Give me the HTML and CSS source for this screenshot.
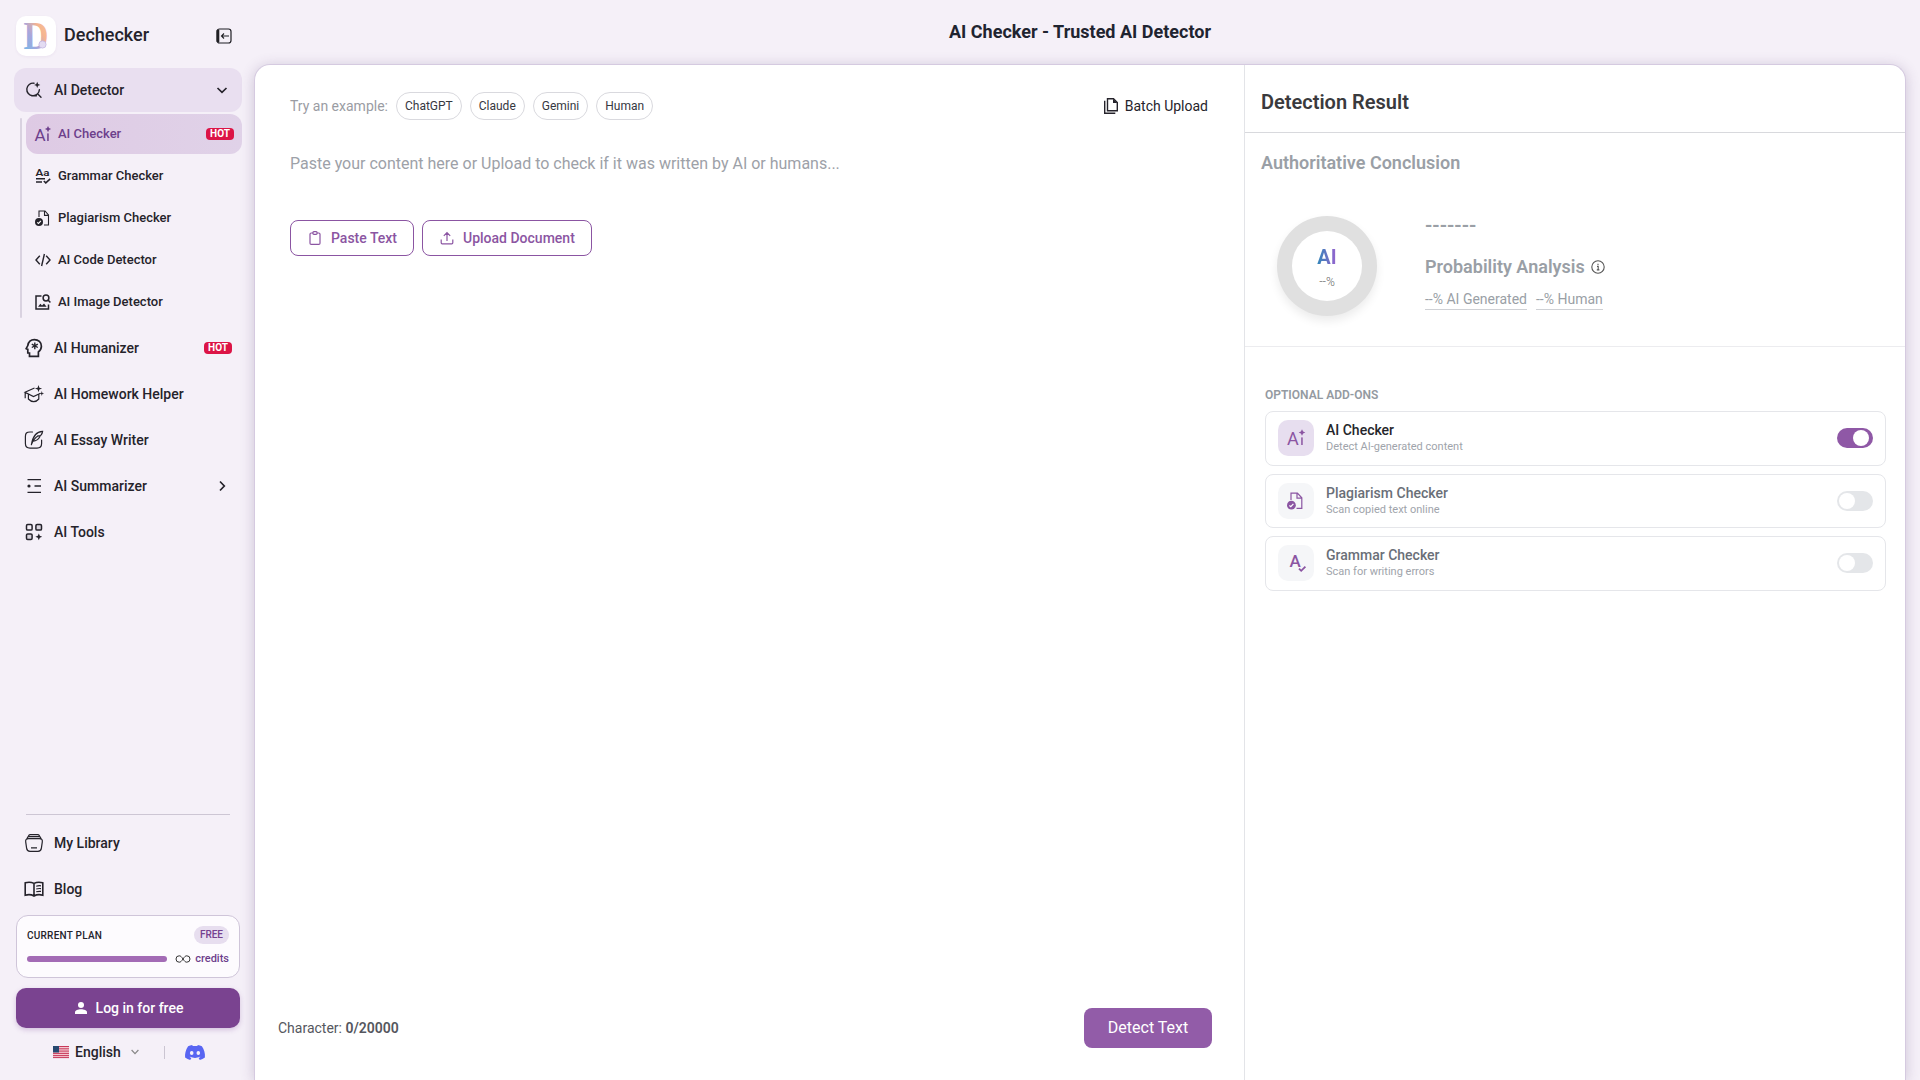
FILE: index.html
```html
<!DOCTYPE html>
<html lang="en">
<head>
  <meta charset="UTF-8">
  <title>AI Checker - Trusted AI Detector</title>
  <link rel="stylesheet" href="styles.css">
</head>
<body>
  <aside class="sidebar">
    <div class="brand">
      <div class="logo">
        <svg width="30" height="30" viewBox="0 0 30 30">
          <defs>
            <linearGradient id="logoFill" x1="0" y1="1" x2="1" y2="0">
              <stop offset="0" stop-color="#62c0ee"/>
              <stop offset="0.4" stop-color="#a9a6dc"/>
              <stop offset="0.65" stop-color="#f6b48f"/>
              <stop offset="1" stop-color="#f3cf9c"/>
            </linearGradient>
          </defs>
          <text x="2.500" y="28" class="logo-letter" textLength="25" lengthAdjust="spacingAndGlyphs" fill="url(#logoFill)">D</text>
          <circle cx="21.500" cy="23.500" r="3.600" fill="#e3dcf2" stroke="#c3b6e2" stroke-width="0.8"/>
        </svg>
      </div>
      <span class="brand-name">Dechecker</span>
      <svg class="collapse" width="16" height="16" viewBox="0 0 16 16" fill="none" stroke="#1f1f24">
        <rect x="1" y="1" width="14" height="14" rx="2.5" stroke-width="1.2"/>
        <path d="M2 2v12" stroke-width="2.6"/>
        <path d="M13 8H5.5M8 5.5L5.5 8L8 10.5" stroke-width="1.1"/>
      </svg>
    </div>

    <nav class="menu">
      <a class="menu-item open">
        <svg width="18" height="18" viewBox="0 0 18 18" fill="none" stroke="currentColor" stroke-width="1.4" stroke-linecap="round">
          <path d="M9 2.2A6.3 6.3 0 1 0 14.4 8.6M12.6 12.8L16 16.2M6.500 14.700h5"/>
          <path d="M12.2 .8l.9 2.2 2.2.9-2.2.9-.9 2.2-.9-2.2-2.2-.9 2.2-.9z" fill="currentColor" stroke="none"/>
        </svg>
        <span>AI Detector</span>
        <svg class="arrow" width="12" height="12" viewBox="0 0 12 12" fill="none" stroke="currentColor" stroke-width="1.7"><path d="M1.5 4L6 8.3L10.5 4"/></svg>
      </a>

      <div class="submenu">
        <a class="sub-item active">
          <svg width="16" height="16" viewBox="0 0 16 16" fill="currentColor">
            <text x="-0.500" y="15" font-size="17" font-weight="400">A</text>
            <rect x="12.200" y="7.400" width="1.500" height="7.600"/>
            <path d="M13 0l1 2.100 2.100 1-2.100 1-1 2.100-1-2.100-2.100-1 2.100-1z"/>
          </svg>
          <span>AI Checker</span>
          <b class="hot">HOT</b>
        </a>
        <a class="sub-item">
          <svg width="16" height="16" viewBox="0 0 16 16" fill="none" stroke="currentColor" stroke-width="1.5">
            <text x="0.500" y="8.400" font-size="9.500" font-weight="600" fill="currentColor" stroke="none" textLength="14" lengthAdjust="spacingAndGlyphs">Aa</text>
            <path d="M1 10.8h9M1 14h6M8.8 13l2 1.9 4.4-4"/>
          </svg>
          <span>Grammar Checker</span>
        </a>
        <a class="sub-item">
          <svg width="16" height="16" viewBox="0 0 16 16" fill="none" stroke="currentColor" stroke-width="1.1">
            <path d="M4 7V1h6l3.500 4v10H9M9.500 1v4.400h4"/>
            <circle cx="4" cy="12" r="4" fill="currentColor" stroke="none"/>
            <path d="M2.2 12.3l1.3 1.1 2.4-2.6" stroke="#fff"/>
          </svg>
          <span>Plagiarism Checker</span>
        </a>
        <a class="sub-item">
          <svg width="16" height="16" viewBox="0 0 16 16" fill="none" stroke="currentColor" stroke-width="1.4">
            <path d="M4.8 3.8L1 8l3.8 4.2M11.2 3.8L15 8l-3.8 4.2M9.4 2L6.6 14"/>
          </svg>
          <span>AI Code Detector</span>
        </a>
        <a class="sub-item">
          <svg width="16" height="16" viewBox="0 0 16 16" fill="none" stroke="currentColor" stroke-width="1.5">
            <path d="M6.5 2H1v13h12.5v-4.5"/>
            <circle cx="11" cy="4" r="2.9"/>
            <path d="M13 6l2.4 2.6"/>
            <path d="M3 12.8l2.4-3 1.6 1.8L9 9.4l2.6 3.4z" fill="currentColor" stroke="none"/>
          </svg>
          <span>AI Image Detector</span>
        </a>
      </div>

      <a class="menu-item">
        <svg width="18" height="20" viewBox="0 0 18 20" fill="none" stroke="currentColor" stroke-width="1.7">
          <path d="M4.5 18.400v-3.400H2.800v-3.600L1.200 10.600 2.800 7.600C3.400 3.600 6 1.600 9.400 1.600c4 0 7 2.800 7 6.600 0 2.600-1.200 4.400-3 5.800v4.400z"/>
          <path d="M9.800 4.400v6.800M6.800 6.100l6 3.400M12.800 6.100l-6 3.400" stroke-width="1.4"/>
        </svg>
        <span>AI Humanizer</span>
        <b class="hot">HOT</b>
      </a>
      <a class="menu-item">
        <svg width="20" height="18" viewBox="0 0 20 18" fill="none" stroke="currentColor" stroke-width="1.2">
          <path d="M10.5 3L1 7.2l8.500 4.300 7-3.200M1.200 7.400v5.800M4.400 9.400V14c3 3.400 7.600 3.400 10.400 0V9.600"/>
          <path d="M14.5 0l.9 2.700 2.700.9-2.700.9-.9 2.700-.9-2.700-2.700-.9 2.700-.9zM17.800 6l.6 1.900 1.800.6-1.800.6-.6 1.900-.6-1.900-1.800-.6 1.800-.6z" fill="currentColor" stroke="none"/>
        </svg>
        <span>AI Homework Helper</span>
      </a>
      <a class="menu-item">
        <svg width="20" height="20" viewBox="0 0 20 20" fill="none" stroke="currentColor" stroke-width="1.2" stroke-linecap="round">
          <path d="M8.5 2H6C2.6 2 1.4 3.2 1.4 6.6v7c0 3.4 1.2 4.6 4.6 4.6h7c3.4 0 4.6-1.2 4.6-4.6V10"/>
          <path d="M7.4 14.6C8.6 7.4 12 1.6 18.6 1.4c-.2 2-.9 3.2-2 4.2l-2 .3 1.2.9c-1.6 3-3.800 4.200-6.600 4.400M7.400 14.600c1.200-3.400 3-6.400 6.400-8.600"/>
        </svg>
        <span>AI Essay Writer</span>
      </a>
      <a class="menu-item">
        <svg width="18" height="18" viewBox="0 0 18 18" fill="none" stroke="currentColor" stroke-width="1.3">
          <path d="M2.500 2.600H16M9.500 9H16M2.500 15.400H16"/>
          <circle cx="4" cy="9" r="1.6" fill="currentColor" stroke="none"/>
        </svg>
        <span>AI Summarizer</span>
        <svg class="arrow" width="12" height="12" viewBox="0 0 12 12" fill="none" stroke="currentColor" stroke-width="1.7"><path d="M4 1.5L8.3 6L4 10.5"/></svg>
      </a>
      <a class="menu-item">
        <svg width="18" height="18" viewBox="0 0 18 18" fill="none" stroke="currentColor" stroke-width="1.5">
          <rect x="1.500" y="1.500" width="5.600" height="5.600" rx="1.200"/>
          <rect x="10.900" y="1.500" width="5.600" height="5.600" rx="1.200" fill="#dad5df"/>
          <rect x="1.500" y="10.900" width="5.600" height="5.600" rx="1.200" fill="#dad5df"/>
          <path d="M13.800 10.400l1 2.400 2.400 1-2.400 1-1 2.400-1-2.400-2.400-1 2.400-1z" fill="currentColor" stroke="none"/>
        </svg>
        <span>AI Tools</span>
      </a>
    </nav>

    <div class="sidebar-bottom">
      <hr>
      <a class="menu-item">
        <svg width="20" height="20" viewBox="0 0 20 20" fill="none" stroke="currentColor" stroke-width="1.2">
          <path d="M5.600 1.600h8.800M4.200 3.600h11.600" stroke-width="1.4"/>
          <path d="M4.600 5.600h10.800c2.200 0 3.200 1.200 2.900 3.200l-.9 6.400c-.3 2.200-1.400 3.200-3.400 3.200H6c-2 0-3.100-1-3.400-3.200l-.9-6.400C1.400 6.800 2.400 5.600 4.600 5.600zM7 14.800h6M5.600 1.400L2.600 6M14.400 1.400l3 4.600"/>
        </svg>
        <span>My Library</span>
      </a>
      <a class="menu-item">
        <svg width="20" height="18" viewBox="0 0 20 18" fill="none" stroke="currentColor" stroke-width="1.6">
          <path d="M10 3.4C7.6 2.2 4.2 2 1.200 2.800v12.400c3-.8 6.400-.6 8.800.8 2.400-1.400 5.800-1.600 8.800-.8V2.800C15.800 2 12.400 2.200 10 3.400zV16"/>
          <path d="M12.2 6.200c1.600-.5 3.200-.6 4.800-.4M12.200 9c1.600-.5 3.200-.6 4.800-.4M12.200 11.800c1.600-.5 3.200-.6 4.800-.4" stroke-width="1.2"/>
        </svg>
        <span>Blog</span>
      </a>

      <div class="plan">
        <div class="plan-row">
          <span class="plan-title">CURRENT PLAN</span>
          <span class="plan-badge">FREE</span>
        </div>
        <div class="plan-row">
          <div class="plan-bar"></div>
          <svg width="16" height="8" viewBox="0 0 16 8" fill="none" stroke="#333" stroke-width="1">
            <path d="M8 4C6.6 1.800 5.600.8 4.200.8a3.200 3.200 0 0 0 0 6.400C5.600 7.200 6.600 6.200 8 4s2.400-3.200 3.800-3.200a3.200 3.200 0 0 1 0 6.400C10.400 7.200 9.400 6.200 8 4z"/>
          </svg>
          <span class="credits">credits</span>
        </div>
      </div>

      <button class="login">
        <svg width="12" height="12" viewBox="0 0 12 12" fill="#fff"><circle cx="6" cy="3" r="3"/><path d="M0 12V10.200C0 8.200 3 7.200 6 7.200s6 1 6 3V12z"/></svg>
        Log in for free
      </button>

      <div class="lang-row">
        <svg class="flag" width="16" height="12" viewBox="0 0 16 12">
          <rect width="16" height="12" fill="#f3c6d0"/>
          <path d="M0 .5h16M0 2.800h16M0 5.100h16M0 7.400h16M0 9.600h16M0 11.600h16" stroke="#c8395a" stroke-width="1"/>
          <rect width="6" height="6.500" fill="#26486f"/>
        </svg>
        <span class="lang">English</span>
        <svg width="8" height="6" viewBox="0 0 8 6" fill="none" stroke="#888" stroke-width="1.2"><path d="M.6 1L4 4.600L7.400 1"/></svg>
        <i class="sep"></i>
        <svg width="20" height="15" viewBox="0 0 20 15">
          <path fill="#5865f2" d="M16.900 1.300A16 16 0 0 0 12.800 0l-.5 1.100a15 15 0 0 0-4.600 0L7.200 0a16 16 0 0 0-4.100 1.300C.6 5.100-.2 8.800.1 12.500A16.500 16.500 0 0 0 5.200 15l1.200-2-1.800-.9.4-.3a12 12 0 0 0 10 0l.4.3-1.800.9 1.200 2a16.500 16.500 0 0 0 5.100-2.500c.4-4.300-.8-8-3-11.200z"/>
          <ellipse cx="6.700" cy="8" rx="1.800" ry="2" fill="#f5f0f9"/>
          <ellipse cx="13.300" cy="8" rx="1.800" ry="2" fill="#f5f0f9"/>
        </svg>
      </div>
    </div>
  </aside>

  <main class="main">
    <h1>AI Checker - Trusted AI Detector</h1>

    <div class="workspace">
      <section class="editor">
        <div class="examples">
          <span class="examples-label">Try an example:</span>
          <button class="pill">ChatGPT</button>
          <button class="pill">Claude</button>
          <button class="pill">Gemini</button>
          <button class="pill">Human</button>
          <a class="batch">
            <svg width="14" height="16" viewBox="0 0 14 16" fill="none" stroke="currentColor" stroke-width="1.4">
              <path d="M3.500.7h6l3.800 3.800v8.300H3.500zM.7 2.800v12.500h10.600"/>
              <path d="M9 .7v4.300h4.300z" fill="currentColor" stroke="none"/>
            </svg>
            Batch Upload
          </a>
        </div>
        <p class="placeholder">Paste your content here or Upload to check if it was written by AI or humans...</p>
        <div class="actions">
          <button class="outline-btn">
            <svg width="14" height="14" viewBox="0 0 14 14" fill="none" stroke="currentColor" stroke-width="1.2">
              <rect x="2" y="2" width="10" height="11.400" rx="1.200"/>
              <rect x="4.900" y="0.700" width="4.200" height="2.600" rx="1" fill="#fff"/>
            </svg>
            Paste Text
          </button>
          <button class="outline-btn">
            <svg width="14" height="14" viewBox="0 0 14 14" fill="none" stroke="currentColor" stroke-width="1.2">
              <path d="M7 10V1.800M3.800 4.800L7 1.600l3.200 3.200M1.200 8.600v3.200c0 .6.4 1 1 1h9.600c.6 0 1-.4 1-1V8.600"/>
            </svg>
            Upload Document
          </button>
        </div>
        <div class="editor-footer">
          <span>Character: <b>0/20000</b></span>
          <button class="detect">Detect Text</button>
        </div>
      </section>

      <section class="result">
        <h2>Detection Result</h2>
        <div class="conclusion">
          <h3>Authoritative Conclusion</h3>
          <div class="score">
            <div class="donut">
              <div class="donut-hole">
                <span class="donut-ai">AI</span>
                <span class="donut-value">--%</span>
              </div>
            </div>
            <div class="score-info">
              <div class="dashes">-------</div>
              <div class="probability">
                Probability Analysis
                <svg width="14" height="14" viewBox="0 0 14 14" fill="none" stroke="#555" stroke-width="1.1"><circle cx="7" cy="7" r="6.200"/><path d="M6 6.400h1.200v3.400M5.800 9.900h2.600M7 3.800v1.100"/></svg>
              </div>
              <div class="shares">
                <span>--% AI Generated</span>
                <span>--% Human</span>
              </div>
            </div>
          </div>
        </div>

        <div class="addons">
          <h4>OPTIONAL ADD-ONS</h4>
          <div class="addon on">
            <div class="addon-icon">
              <svg width="18" height="16" viewBox="0 0 18 16" fill="currentColor">
                <text x="0" y="15" font-size="18">A</text>
                <rect x="14.200" y="7.400" width="1.500" height="7.600"/>
                <path d="M15-.800l1.100 2.200 2.200 1.100-2.200 1.100-1.100 2.200-1.100-2.200-2.200-1.100 2.200-1.100z"/>
              </svg>
            </div>
            <div class="addon-text">
              <strong>AI Checker</strong>
              <small>Detect AI-generated content</small>
            </div>
            <div class="toggle"></div>
          </div>
          <div class="addon">
            <div class="addon-icon">
              <svg width="18" height="18" viewBox="0 0 18 18" fill="none" stroke="currentColor" stroke-width="1.2">
                <path d="M4 8V1.200h6.400l4.400 4.600v10.600H9.500M10 1.200v5h4.800"/>
                <circle cx="4.400" cy="13.200" r="4.400" fill="currentColor" stroke="none"/>
                <path d="M2.400 13.500l1.400 1.200 2.600-2.800" stroke="#fff"/>
              </svg>
            </div>
            <div class="addon-text">
              <strong>Plagiarism Checker</strong>
              <small>Scan copied text online</small>
            </div>
            <div class="toggle"></div>
          </div>
          <div class="addon">
            <div class="addon-icon">
              <svg width="18" height="18" viewBox="0 0 18 18" fill="none" stroke="currentColor" stroke-width="1.8">
                <text x="2.600" y="13.400" font-size="17" font-weight="500" fill="currentColor" stroke="none">A</text>
                <path d="M12 14.600l2.200 2.200 4.200-4.200"/>
              </svg>
            </div>
            <div class="addon-text">
              <strong>Grammar Checker</strong>
              <small>Scan for writing errors</small>
            </div>
            <div class="toggle"></div>
          </div>
        </div>
      </section>
    </div>
  </main>
</body>
</html>
```
FILE: styles.css
```css
* {
  margin: 0;
  padding: 0;
  box-sizing: border-box;
}

body {
  font-family: Roboto, sans-serif;
  background: #f5f0f8;
  color: #25232b;
  height: 100vh;
  display: flex;
  overflow: hidden;
}

button {
  font-family: inherit;
  cursor: pointer;
}

svg {
  flex-shrink: 0;
  overflow: visible;
}

/* sidebar */
.sidebar {
  width: 254px;
  height: 100vh;
  padding: 16px 12px 16px 14px;
  display: flex;
  flex-direction: column;
}

.brand {
  display: flex;
  align-items: center;
  height: 40px;
  margin: 0 8px 12px 2px;
}

.logo {
  width: 40px;
  height: 40px;
  background: #fff;
  border-radius: 10px;
  display: flex;
  align-items: center;
  justify-content: center;
  box-shadow: 0 1px 3px rgba(80, 40, 120, 0.06);
}

.logo-letter {
  font-family: "Liberation Serif", serif;
  font-size: 40px;
  font-weight: bold;
}

.brand-name {
  font-size: 18px;
  font-weight: 500;
  line-height: 20px;
  margin: 0 0 2px 8px;
}

.collapse {
  margin-left: auto;
  margin-right: 2px;
}

.menu {
  display: flex;
  flex-direction: column;
  gap: 2px;
}

.menu-item {
  width: 228px;
  height: 44px;
  padding: 0 10px;
  display: flex;
  align-items: center;
  border-radius: 12px;
  font-size: 14px;
  font-weight: 500;
}

.menu-item span {
  margin-left: 10px;
}

.menu-item svg:first-child {
  width: 20px;
}

.menu-item.open {
  background: #e9dff0;
}

.menu-item .arrow {
  margin-left: auto;
  margin-right: 4px;
}

.submenu {
  display: flex;
  flex-direction: column;
  gap: 2px;
  margin-bottom: 2px;
  margin-left: 6px;
  padding-left: 6px;
  position: relative;
}

.submenu::before {
  content: "";
  position: absolute;
  left: 0;
  top: 4px;
  bottom: 4px;
  width: 2px;
  border-radius: 2px;
  background: #d9d2e0;
}

.sub-item {
  width: 216px;
  height: 40px;
  padding: 0 8px 0 9px;
  display: flex;
  align-items: center;
  border-radius: 12px;
  font-size: 13px;
  font-weight: 500;
}

.sub-item span {
  margin: 0 0 2px 7px;
}

.sub-item.active {
  background: linear-gradient(to right, #decae4, #e0d2e8);
  color: #6d3f8c;
}

.hot {
  margin-left: auto;
  width: 28px;
  height: 12px;
  border-radius: 4px;
  background: #dc1446;
  color: #fff;
  font-size: 10px;
  line-height: 12px;
  text-align: center;
}

.sidebar-bottom {
  margin-top: auto;
}

.sidebar-bottom hr {
  border: none;
  border-top: 1px solid #cdc6d4;
  margin: 0 12px 6px 12px;
}

.sidebar-bottom .menu-item {
  margin-bottom: 2px;
}

.plan {
  margin: 4px 0 10px 2px;
  width: 224px;
  height: 63px;
  padding: 10px;
  background: #fdfbfe;
  border: 1px solid #cfc5d9;
  border-radius: 12px;
}

.plan-row {
  display: flex;
  align-items: center;
  justify-content: space-between;
}

.plan-title {
  font-size: 10px;
  font-weight: 500;
  letter-spacing: 0.25px;
}

.plan-badge {
  height: 18px;
  padding: 0 6px;
  border-radius: 9px;
  background: #e7deef;
  color: #75418f;
  font-size: 10px;
  font-weight: 500;
  line-height: 18px;
}

.plan-bar {
  width: 140px;
  height: 6px;
  border-radius: 3px;
  background: #a36bb5;
}

.plan-row + .plan-row {
  margin-top: 9px;
}

.credits {
  font-size: 11px;
  font-weight: 500;
  line-height: 12px;
  color: #6d3f8c;
  margin-left: -4px;
}

.login {
  display: flex;
  align-items: center;
  justify-content: center;
  gap: 9px;
  width: 224px;
  height: 40px;
  margin-left: 2px;
  padding-left: 2px;
  border: none;
  border-radius: 10px;
  background: #7a4390;
  color: #fff;
  font-size: 14px;
  font-weight: 500;
  box-shadow: 0 2px 5px rgba(120, 60, 150, 0.25);
}

.lang-row {
  display: flex;
  align-items: center;
  height: 20px;
  margin: 14px 0 2px 39px;
}

.lang {
  font-size: 14px;
  font-weight: 500;
  margin: 0 10px 0 6px;
}

.sep {
  width: 1px;
  height: 13px;
  background: #cbc5d2;
  margin: 0 20px 0 25px;
}

/* main area */
.main {
  flex: 1;
  display: flex;
  flex-direction: column;
  padding-right: 14px;
}

h1 {
  height: 64px;
  line-height: 64px;
  font-size: 18px;
  font-weight: 700;
  text-align: center;
  color: #1f2430;
}

.workspace {
  flex: 1;
  display: flex;
  background: #fff;
  border: 1px solid #d5cae0;
  border-bottom: none;
  border-radius: 16px 16px 0 0;
  box-shadow: 0 2px 14px rgba(80, 55, 110, 0.24);
}

.editor {
  width: 990px;
  padding: 27px 36px 32px 35px;
  display: flex;
  flex-direction: column;
  border-right: 1px solid #e3e4e8;
}

.examples {
  display: flex;
  align-items: center;
  gap: 8px;
}

.examples-label {
  font-size: 14px;
  color: #9a9ca3;
}

.pill {
  height: 28px;
  padding: 0 8px;
  border: 1px solid #d9d9de;
  border-radius: 14px;
  background: #fff;
  color: #36383f;
  font-size: 12px;
}

.batch {
  display: flex;
  align-items: center;
  gap: 7px;
  margin-left: auto;
  font-size: 14px;
}

.placeholder {
  margin-top: 32px;
  font-size: 16px;
  line-height: 24px;
  color: #9da1a8;
}

.actions {
  display: flex;
  gap: 8px;
  margin-top: 44px;
}

.outline-btn {
  display: flex;
  align-items: center;
  gap: 9px;
  height: 36px;
  padding: 0 16px 0 17px;
  border: 1px solid #8b55a2;
  border-radius: 8px;
  background: #fff;
  color: #8b55a2;
  font-size: 14px;
  font-weight: 500;
}

.editor-footer {
  display: flex;
  align-items: center;
  justify-content: space-between;
  margin: auto -4px 0 -12px;
  font-size: 14px;
  color: #55575e;
}

.editor-footer b {
  font-weight: 600;
}

.detect {
  width: 128px;
  height: 40px;
  padding-bottom: 1px;
  border: none;
  border-radius: 8px;
  background: #925ca8;
  color: #fff;
  font-size: 16px;
}

/* detection result */
.result {
  flex: 1;
}

h2 {
  height: 68px;
  padding: 14px 16px 0;
  line-height: 46px;
  font-size: 20px;
  font-weight: 600;
  color: #3a3a3d;
  border-bottom: 1px solid #d8d9dd;
}

.conclusion {
  height: 214px;
  padding: 18px 16px 0;
  border-bottom: 1px solid #ececef;
}

h3 {
  font-size: 18px;
  line-height: 24px;
  font-weight: 600;
  color: #9a9fa6;
}

.score {
  display: flex;
  align-items: flex-start;
  margin-top: 41px;
}

.donut {
  width: 100px;
  height: 100px;
  margin: 0 48px 0 16px;
  padding: 15px;
  border-radius: 50%;
  background: #e0e0e0;
  box-shadow: 0 5px 10px rgba(0, 0, 0, 0.08);
}

.donut-hole {
  height: 70px;
  padding-top: 3px;
  border-radius: 50%;
  background: #fff;
  display: flex;
  flex-direction: column;
  align-items: center;
  justify-content: center;
}

.donut-ai {
  font-size: 20px;
  font-weight: 700;
  line-height: 28px;
  background: linear-gradient(to right, #2f86b8, #9b62d0);
  -webkit-background-clip: text;
  color: transparent;
}

.donut-value {
  font-size: 12px;
  line-height: 22px;
  font-weight: 300;
  color: #666;
}

.dashes {
  margin-top: -3px;
  font-size: 20px;
  line-height: 24px;
  font-weight: 600;
  color: #9a9fa6;
}

.probability {
  display: flex;
  align-items: center;
  gap: 6px;
  margin-top: 18px;
  font-size: 18px;
  line-height: 24px;
  font-weight: 600;
  color: #9a9fa6;
}

.shares {
  display: flex;
  gap: 9px;
  margin-top: 10px;
  font-size: 14px;
  color: #9a9fa6;
}

.shares span {
  height: 21px;
  line-height: 20px;
  border-bottom: 1px solid #cfd1d5;
}

.addons {
  padding: 40px 19px 0 20px;
}

h4 {
  font-size: 12px;
  line-height: 16px;
  font-weight: 600;
  color: #949aa1;
  margin-bottom: 8px;
}

.addon {
  display: flex;
  align-items: center;
  height: 54.5px;
  padding: 0 12px;
  margin-bottom: 8px;
  border: 1px solid #e5e6ea;
  border-radius: 8px;
}

.addon-icon {
  width: 36px;
  height: 36px;
  border-radius: 10px;
  background: #f5f6f8;
  color: #8b55a2;
  display: flex;
  align-items: center;
  justify-content: center;
}

.addon.on .addon-icon {
  background: #e7deef;
}

.addon-text {
  display: flex;
  flex-direction: column;
  margin-left: 12px;
}

.addon-text strong {
  font-size: 14px;
  line-height: 18px;
  font-weight: 500;
  color: #6a6f78;
}

.addon.on strong {
  color: #25262b;
}

.addon-text small {
  font-size: 11px;
  line-height: 16px;
  color: #a0a4ab;
}

.toggle {
  width: 36px;
  height: 20px;
  margin-left: auto;
  padding: 2px;
  border-radius: 10px;
  background: #e4e6e9;
}

.toggle::before {
  content: "";
  display: block;
  width: 16px;
  height: 16px;
  border-radius: 50%;
  background: #fff;
}

.addon.on .toggle {
  background: #8f58a6;
}

.addon.on .toggle::before {
  margin-left: 14px;
}
```
